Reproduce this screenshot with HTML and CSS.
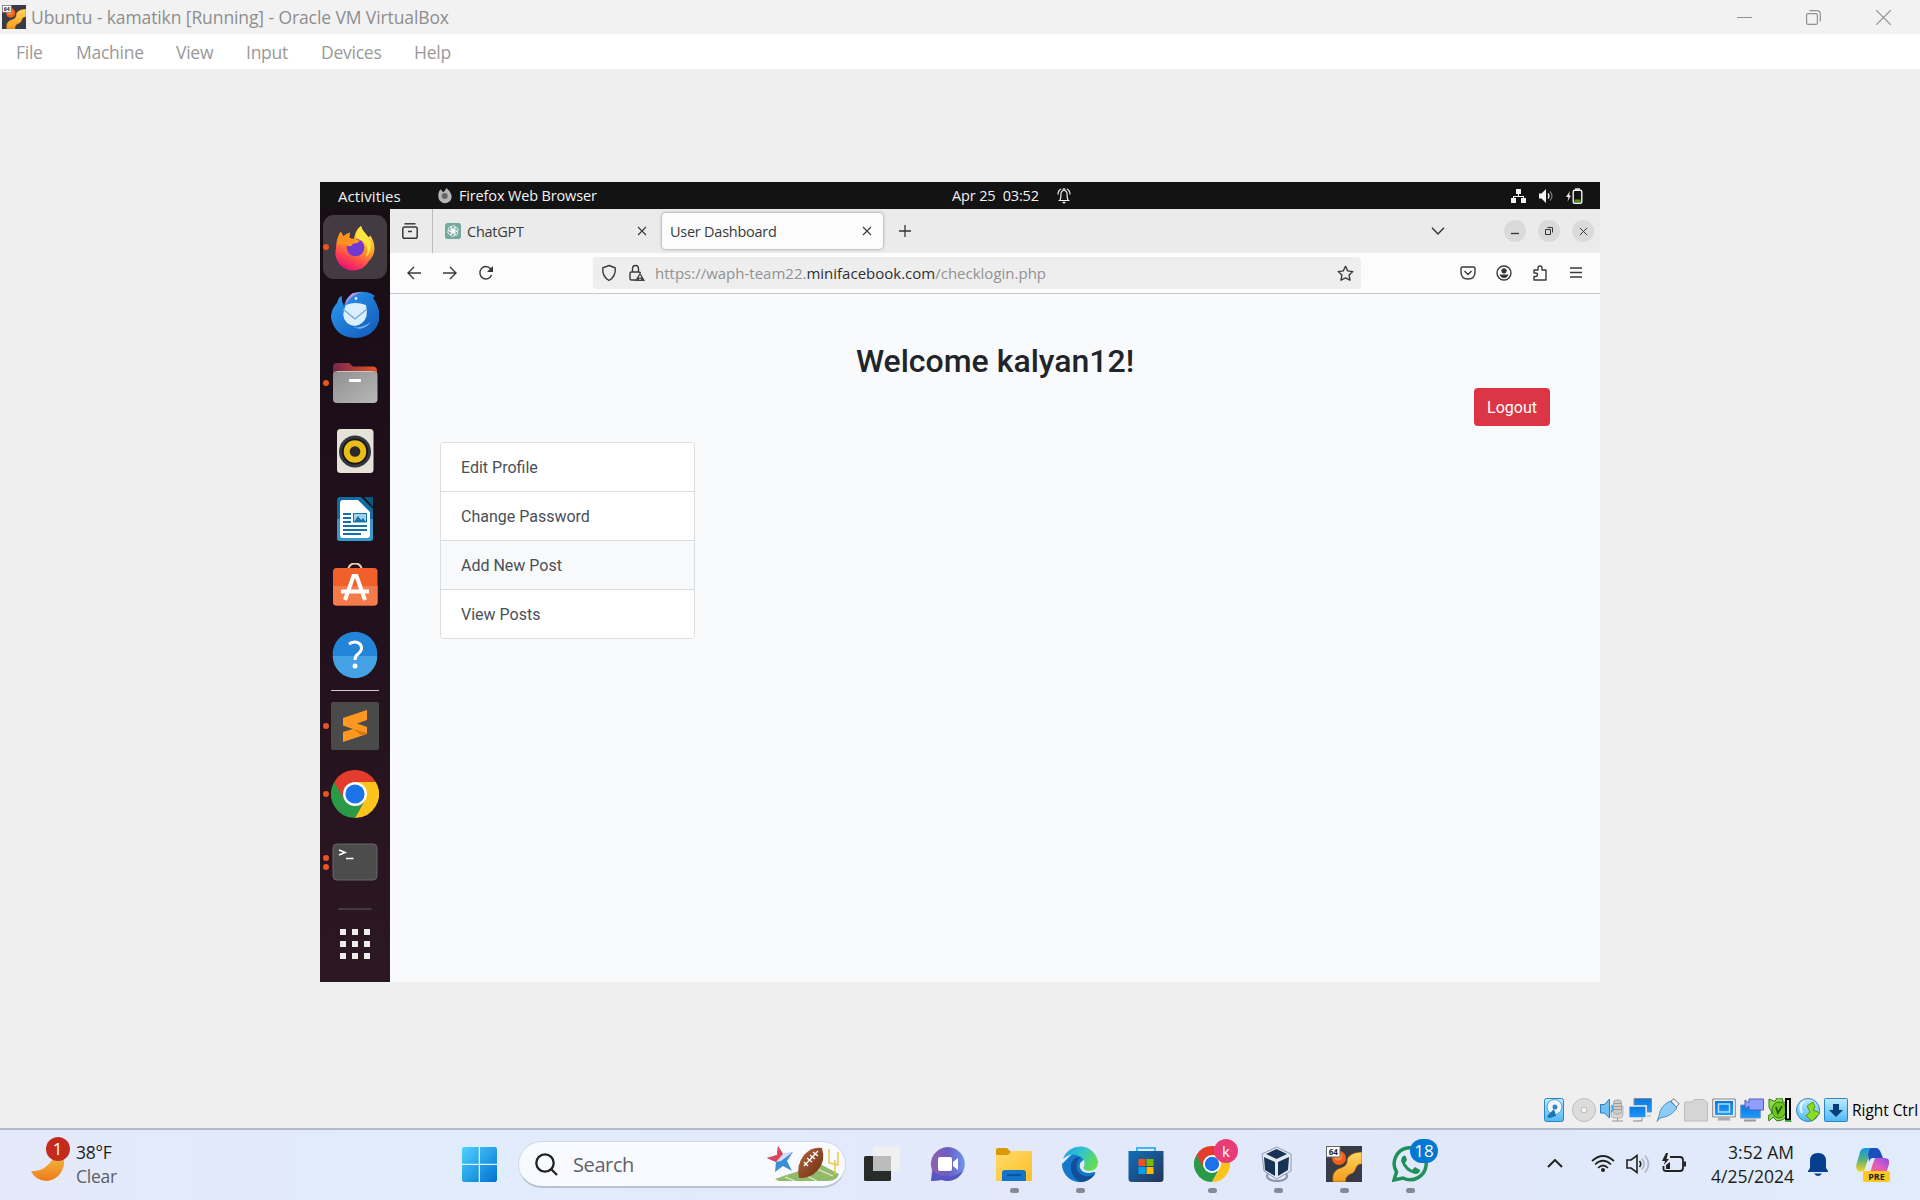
FILE: index.html
```html
<!DOCTYPE html>
<html lang="en">
<head>
<meta charset="utf-8">
<title>Ubuntu - kamatikn [Running] - Oracle VM VirtualBox</title>
<link rel="stylesheet" href="styles.css">
</head>
<body>
<svg class="defs" width="0" height="0">
  <defs>
    <linearGradient id="gFox" x1=".75" y1="0" x2=".3" y2="1"><stop offset="0" stop-color="#fff04a"/><stop offset=".45" stop-color="#ff9a28"/><stop offset=".75" stop-color="#ff4450"/><stop offset="1" stop-color="#e8107a"/></linearGradient>
    <linearGradient id="gBird" x1="0" y1="0" x2="1" y2="1"><stop offset="0" stop-color="#2a9bf0"/><stop offset="1" stop-color="#1257b8"/></linearGradient>
    <linearGradient id="gFold" x1="0" y1="0" x2="1" y2="0"><stop offset="0" stop-color="#76264f"/><stop offset="1" stop-color="#e9541f"/></linearGradient>
    <linearGradient id="gGrey" x1="0" y1="0" x2="1" y2="1"><stop offset="0" stop-color="#8e8e8e"/><stop offset="1" stop-color="#b9b9b9"/></linearGradient>
    <linearGradient id="gWin" x1="0" y1="0" x2="1" y2="1"><stop offset="0" stop-color="#4fd3ff"/><stop offset="1" stop-color="#0070d0"/></linearGradient>
    <linearGradient id="gBlue" x1="0" y1="0" x2="0" y2="1"><stop offset="0" stop-color="#bfeaff"/><stop offset="1" stop-color="#4fb8f5"/></linearGradient>
    <linearGradient id="gScr" x1="0" y1="0" x2="0" y2="1"><stop offset="0" stop-color="#0a78dc"/><stop offset="1" stop-color="#1e9bff"/></linearGradient>
    <linearGradient id="gMoon" x1="0" y1="0" x2="0" y2="1"><stop offset="0" stop-color="#f0b43c"/><stop offset="1" stop-color="#f07818"/></linearGradient>
    <linearGradient id="gYel" x1="0" y1="0" x2="1" y2="1"><stop offset="0" stop-color="#ffdb6a"/><stop offset="1" stop-color="#fcbf26"/></linearGradient>
    <linearGradient id="gChat" x1="0" y1="0" x2="1" y2="0"><stop offset="0" stop-color="#8f63ac"/><stop offset=".5" stop-color="#6a5ec4"/><stop offset="1" stop-color="#6d96ea"/></linearGradient>
    <linearGradient id="gEdge" x1="0" y1="0" x2="1" y2=".5"><stop offset="0" stop-color="#1f9fe4"/><stop offset=".5" stop-color="#2fc3cf"/><stop offset="1" stop-color="#62dd55"/></linearGradient>
    <linearGradient id="gStore" x1="0" y1="0" x2="1" y2="1"><stop offset="0" stop-color="#1070bd"/><stop offset="1" stop-color="#253457"/></linearGradient>
    <linearGradient id="gVm" x1="0" y1="0" x2="0" y2="1"><stop offset="0" stop-color="#ffd75e"/><stop offset="1" stop-color="#f59a1c"/></linearGradient>
    <linearGradient id="gBall" x1="0" y1="0" x2="1" y2="1"><stop offset="0" stop-color="#b5673a"/><stop offset="1" stop-color="#6a2d14"/></linearGradient>
    <linearGradient id="gCopA" x1="0" y1="0" x2="0" y2="1"><stop offset="0" stop-color="#1495e8"/><stop offset=".5" stop-color="#55b37a"/><stop offset="1" stop-color="#ffd21c"/></linearGradient>
    <linearGradient id="gCopB" x1="1" y1="0" x2="0" y2="1"><stop offset="0" stop-color="#8d4be8"/><stop offset=".5" stop-color="#e05cc0"/><stop offset="1" stop-color="#ff6a66"/></linearGradient>
    <symbol id="vm64" viewBox="0 0 36 36">
      <path d="M0 0h36v36H0z" fill="#383a45"/>
      <circle cx="13" cy="12" r="7" fill="#f0601c"/><circle cx="12" cy="10.500" r="4" fill="#ff8c42"/>
      <path d="M36 6C27 6 21 10 21 15C21 20 17 21 12 23C7 26 6 30 7 36H20C19 31 22 29 27 27C31 24 29 18 36 18Z" fill="url(#gVm)" stroke="#8a4b10" stroke-width=".7"/>
      <path d="M.5 .5h13.500v10.500H.5z" fill="#fff" stroke="#666"/>
      <text x="7.300" y="9.200" text-anchor="middle" class="bits">64</text>
    </symbol>
    <symbol id="chrome" viewBox="0 0 48 48">
      <path d="M24 24 3.200 12A24 24 0 0 1 44.800 12Z" fill="#e33b2e"/>
      <path d="M24 24H12L3.200 12A24 24 0 0 0 24 48L34 30Z" fill="#2b9a47"/>
      <path d="M24 12H44.800A24 24 0 0 1 24 48L34 30Z" fill="#fcc31a"/>
      <path d="M3.200 12 13.600 30 20 14Z" fill="#e33b2e"/>
      <circle cx="24" cy="24" r="12" fill="#fff"/><circle cx="24" cy="24" r="9.600" fill="#1a73e8"/>
    </symbol>
    <symbol id="cross" viewBox="0 0 10 10"><path d="M1 1 9 9M9 1 1 9" fill="none" stroke="currentColor" stroke-width="1.100"/></symbol>
  </defs>
</svg>

<header class="titlebar">
  <svg class="app-icon" width="24" height="24"><use href="#vm64"/></svg>
  <span class="title">Ubuntu - kamatikn [Running] - Oracle VM VirtualBox</span>
  <div class="captions">
    <svg width="15" height="15" viewBox="0 0 15 15"><path d="M0 7.500H15" stroke="#909090"/></svg>
    <svg class="restore" width="15" height="15" viewBox="0 0 15 15" fill="none" stroke="#909090" stroke-width="1.200"><rect x=".6" y="3.600" width="10.800" height="10.800" rx="1.500"/><path d="M3.500 .7H11Q14.300 .7 14.300 4V11.500"/></svg>
    <svg width="15" height="15" viewBox="0 0 15 15"><path d="M0 0 15 15M15 0 0 15" stroke="#909090" stroke-width="1.200"/></svg>
  </div>
</header>
<nav class="menubar">
  <span class="m-file">File</span><span class="m-machine">Machine</span><span class="m-view">View</span><span class="m-input">Input</span><span class="m-devices">Devices</span><span class="m-help">Help</span>
</nav>

<main class="stage">
  <section class="guest">
    <div class="topbar">
      <span class="activities">Activities</span>
      <svg class="mini-fox" width="16" height="16" viewBox="0 0 48 48"><path d="M4 24C4 12 7 8 12 4L15 10L20 12C24 8 26 4 28 0C34 6 44 13 44 27A20 20 0 0 1 4 24Z" fill="#b5b5b5"/><circle cx="23" cy="24" r="9" fill="#666"/></svg>
      <span class="app-name">Firefox Web Browser</span>
      <span class="clock">Apr 25&nbsp; 03:52</span>
      <svg class="notif" width="14" height="16" viewBox="0 0 14 16" fill="none" stroke="#eee" stroke-width="1.200"><path d="M1.500 12.500H12.500M3 12Q4 10 4 6Q4 2.500 7 2.500Q10 2.500 10 6Q10 10 11 12M5.500 1.500Q7 .2 8.500 1.500"/><path d="M1 6.500Q1 2.500 4 1M13 6.500Q13 2.500 10 1"/><path d="M5 13.800H9L7 16Z" fill="#eee" stroke="none"/></svg>
      <div class="indicators">
        <svg width="15" height="14" viewBox="0 0 15 14" fill="#f2f2f2"><path d="M5 0h5v5H5zM0 9h5v5H0zM10 9h5v5h-5zM7 5h1v2h5v2h-1V8H3v1H2V7h5z"/></svg>
        <svg width="15" height="14" viewBox="0 0 15 14"><path d="M0 4.500H2.500L7 0V14L2.500 9.500H0Z" fill="#f2f2f2"/><path d="M9 4.500Q11 7 9 9.500" stroke="#f2f2f2" stroke-width="1.300" fill="none"/><path d="M11 2.500Q15 7 11 11.500" stroke="#777" stroke-width="1.300" fill="none"/></svg>
        <svg width="17" height="16" viewBox="0 0 17 16"><path d="M4 3 0 9H2.500L1.500 13.500 5 7.500H3Z" fill="#f2f2f2"/><rect x="7.200" y="2.200" width="8.600" height="13" rx="1.500" fill="none" stroke="#f2f2f2" stroke-width="1.400"/><path d="M9 .3h5v1.500H9z" fill="#f2f2f2"/><path d="M8.500 11.500h6v2.500h-6z" fill="#4e9a06"/></svg>
      </div>
    </div>
    <div class="desktop">
      <aside class="dock">
        <div class="launch active"><i class="dot"></i>
          <svg width="48" height="48" viewBox="0 0 48 48"><g transform="translate(2.200 .3) scale(.93)"><path d="M3 27C3 18 6 12 8 9L11 14Q14 11 18 10L17 15Q21 17 22 19C23 12 25 6 30 3C31 8 34 10 38 15L40 13C47 24 45 35 38 41A19 19 0 0 1 3 27Z" fill="url(#gFox)"/><path d="M30 3C31 8 34 10 37 14C42 20 42 31 35 36C40 26 34 19 27 17C22 15 27 7 30 3Z" fill="#ffe63e"/><circle cx="24" cy="26" r="9.500" fill="#7139d0"/><path d="M15 24Q14 15 24 17L29 19Q26 22 21 22Q20 26 15 24Z" fill="#ff9b22"/><path d="M8 9 11 14Q15 11 18 11L17 16 24 19Q21 23 16 22Q10 21 5 23Q5 15 8 9Z" fill="#ff921e"/></g></svg></div>
        <div class="launch"><svg width="48" height="48" viewBox="0 0 48 48"><path d="M0 27C0 20 3 15 6 12Q8 5 11 5Q10 9 13 15C15 5 23 0 33 1Q39 1 44 5L42 7Q46 12 48 20A24 22 0 0 1 24 47Q4 46 0 27Z" fill="url(#gBird)"/><path d="M14 16C17 7 24 3 32 1L22 2Q15 6 14 16Z" fill="#b991ee"/><path d="M15 14Q24 10 35 14Q38 27 31 32Q24 38 16 32Q9 25 15 14Z" fill="#dceffe"/><path d="M12 18 24 28 36 18" fill="none" stroke="#65a6dc" stroke-width="1.200"/><circle cx="25" cy="7.500" r="1.400" fill="#e4f2ff"/><path d="M22 36Q30 38 40 31Q32 41 22 36" fill="#7eb6f5"/></svg></div>
        <div class="launch"><i class="dot"></i><svg width="48" height="48" viewBox="0 0 48 48"><path d="M2 16V8Q2 4 6 4H18L22 7.500H42Q46 7.500 46 12V18H2Z" fill="url(#gFold)"/><rect x="2" y="12" width="44.500" height="32" rx="4" fill="url(#gGrey)"/><path d="M6 12.500H42" stroke="#c5c5c5"/><rect x="18" y="20" width="12" height="3" rx="1" fill="#fff"/></svg></div>
        <div class="launch"><svg width="48" height="48" viewBox="0 0 48 48"><rect x="6" y="2" width="36.500" height="44" rx="3.500" fill="#e5e2d8"/><circle cx="24" cy="24.500" r="16" fill="#343641"/><circle cx="24" cy="24.500" r="13" fill="#15161b"/><circle cx="24" cy="24.500" r="11.300" fill="#eabd18"/><circle cx="24" cy="24.500" r="5.300" fill="#292929"/></svg></div>
        <div class="launch"><svg width="48" height="48" viewBox="0 0 48 48"><path d="M9 2H30L42 14V43Q42 46 39 46H9Q6 46 6 43V5Q6 2 9 2Z" fill="#0e6da0"/><path d="M6 24H42V43Q42 46 39 46H9Q6 46 6 43Z" fill="#3799ca"/><path d="M33 2H42V12Z" fill="#0b5980"/><path d="M12 5H27L39 17V40Q39 43 36 43H12Q9 43 9 40V8Q9 5 12 5Z" fill="#fff"/><path d="M12 19h8M12 23h8M12 27h8M12 31h24M12 35h24M12 39h18" stroke="#1472a6" stroke-width="2"/><rect x="22.500" y="18.500" width="13" height="8.500" fill="#a3d2ee" stroke="#1472a6"/><path d="M23 27 27 21 30 25 32 23 35 27Z" fill="#1472a6"/></svg></div>
        <div class="launch"><svg width="48" height="48" viewBox="0 0 48 48"><g transform="translate(0 -2)"><path d="M17 8Q18 1.500 24 1.500Q30 1.500 31 8" transform="translate(0 1)" fill="none" stroke="#ecd1ac" stroke-width="2"/><rect x="2" y="7" width="44.500" height="37.500" rx="3.500" fill="#f1602b"/><path d="M2 25H46.500V41Q46.500 44.500 43 44.500H5.500Q2 44.500 2 41Z" fill="#f67b4b"/><path d="M14 39 22.500 15H25.500L34 39M10 30.500H38" fill="none" stroke="#fff" stroke-width="4"/></g></svg></div>
        <div class="launch"><svg width="48" height="48" viewBox="0 0 48 48"><g transform="translate(0 -2)"><circle cx="24" cy="25" r="22.300" fill="#2385d8"/><path d="M1.700 27H46.300A22.300 22.300 0 0 1 1.700 27Z" fill="#44a2e4"/><path d="M18 15Q24 11 29 15Q33 20 27 25Q24 27 24 31" fill="none" stroke="#fff" stroke-width="3"/><circle cx="24" cy="37" r="2.500" fill="#fff"/></g></svg></div>
        <hr class="dock-line">
        <div class="launch"><i class="dot"></i><svg width="48" height="48" viewBox="0 0 48 48"><rect width="48" height="48" rx="2.500" fill="#4a4a4a"/><path d="M12 16 36 8V18L26 21.500 36 25V32L12 40V30L22 27 12 23.500Z" fill="#ff9820"/><path d="M22 27 36 31V32L31 33.500Z" fill="#d87606"/></svg></div>
        <div class="launch"><i class="dot"></i><svg width="48" height="48"><use href="#chrome"/></svg></div>
        <div class="launch"><i class="dot double"></i><svg width="48" height="48" viewBox="0 0 48 48"><rect x="2" y="6" width="44" height="36" rx="4" fill="#4c4c4c" stroke="#666"/><path d="M8 12 14 14.500 8 17M15 20.500H22.500" fill="none" stroke="#fff" stroke-width="1.700"/></svg></div>
        <div class="peek"></div>
        <svg class="apps" width="32" height="32" viewBox="0 0 32 32" fill="#eeedec"><path d="M1 1h6v6H1zM13 1h6v6h-6zM25 1h6v6h-6zM1 13h6v6H1zM13 13h6v6h-6zM25 13h6v6h-6zM1 25h6v6H1zM13 25h6v6h-6zM25 25h6v6h-6z"/></svg>
      </aside>
      <div class="browser">
        <div class="tabs">
          <div class="recent"><svg width="16" height="16" viewBox="0 0 16 16" fill="none" stroke="#3a3a3a" stroke-width="1.500"><path d="M2.500 .8H13.500"/><rect x=".8" y="4" width="14.400" height="11.200" rx="1.800"/><path d="M6 8.500H10"/></svg></div>
          <div class="tab">
            <svg width="16" height="16" viewBox="0 0 16 16"><rect width="16" height="16" rx="2.500" fill="#74aa9c"/><g fill="none" stroke="#fff" stroke-width=".8"><path id="petal" d="M6 8.800V5Q6.300 2.600 8.500 2.600Q10.500 2.800 10.700 4.500L7.500 6.500V9.500"/><use href="#petal" transform="rotate(60 8 8)"/><use href="#petal" transform="rotate(120 8 8)"/><use href="#petal" transform="rotate(180 8 8)"/><use href="#petal" transform="rotate(240 8 8)"/><use href="#petal" transform="rotate(300 8 8)"/></g></svg>
            <span class="t-chat">ChatGPT</span><svg class="x" width="10" height="10"><use href="#cross"/></svg>
          </div>
          <div class="tab current"><span class="t-user">User Dashboard</span><svg class="x" width="10" height="10"><use href="#cross"/></svg></div>
          <svg class="plus" width="12" height="12" viewBox="0 0 12 12"><path d="M6 0V12M0 6H12" stroke="#333" stroke-width="1.300"/></svg>
          <div class="tab-end">
            <svg class="chev" width="14" height="8" viewBox="0 0 14 8"><path d="M1 .8 7 7 13 .8" fill="none" stroke="#333" stroke-width="1.400"/></svg>
            <b class="wb"><svg width="8" height="8" viewBox="0 0 8 8"><path d="M0 6.500H8" stroke="#333" stroke-width="1.300"/></svg></b>
            <b class="wb"><svg width="8" height="8" viewBox="0 0 8 8" fill="none" stroke="#333"><path d="M.5 2.500h5v5h-5zM2.500 .5H7.500V5.500"/></svg></b>
            <b class="wb"><svg width="9" height="9"><use href="#cross"/></svg></b>
          </div>
        </div>
        <div class="navbar">
          <svg class="nav-i" width="16" height="16" viewBox="0 0 16 16"><path d="M15 8H2M8 2 2 8 8 14"/></svg>
          <svg class="nav-i" width="16" height="16" viewBox="0 0 16 16"><path d="M1 8H14M8 2 14 8 8 14"/></svg>
          <svg class="nav-i" width="16" height="16" viewBox="0 0 16 16"><path d="M13.500 10A6 6.300 0 1 1 12.500 3.700L13.500 5"/><path d="M15 1V7H9Z" fill="#333" stroke="none"/></svg>
          <div class="url">
            <svg class="u-i" width="16" height="18" viewBox="0 0 16 18"><path d="M8 1.500 14.200 3.800Q15 12.500 8 16.500Q1 12.500 1.800 3.800Z"/></svg>
            <svg class="u-i lock" width="16" height="18" viewBox="0 0 16 18"><path d="M3.500 8V5Q3.500 1.500 6.500 1.500Q9.500 1.500 9.500 5V8M7 16H2.500Q1 16 1 14.500V9.500Q1 8 2.500 8H10Q11.300 8 11.500 9"/><path d="M11 8.500 16 17H6Z" fill="#444" stroke="none"/><path d="M11 11.500V14M11 15V16" stroke="#fff"/></svg>
            <span class="addr">https://waph-team22.<span class="host">minifacebook.com</span>/checklogin.php</span>
            <svg class="u-i star" width="17" height="17" viewBox="0 0 17 17"><path d="M8.500 1.300 10.700 5.900 15.800 6.600 12.100 10.100 13 15.200 8.500 12.800 4 15.200 4.900 10.100 1.200 6.600 6.300 5.900Z" stroke-linejoin="round"/></svg>
          </div>
          <div class="tools">
            <svg width="16" height="16" viewBox="0 0 16 16"><path d="M2.500 2H13.500Q15 2 15 3.500V7Q15 14 8 14Q1 14 1 7V3.500Q1 2 2.500 2ZM4.500 6 8 9.500 11.500 6"/></svg>
            <svg width="16" height="16" viewBox="0 0 16 16"><circle cx="8" cy="8" r="7"/><circle cx="8" cy="5.800" r="2.600" fill="#333" stroke="none"/><path d="M3.500 9.500H12.500Q11 13 8 13Q5 13 3.500 9.500Z" fill="#333" stroke="none"/></svg>
            <svg width="16" height="16" viewBox="0 0 16 16"><path d="M2 15V11.500H3.500Q5.500 11.500 5.500 9.500Q5.500 8 3.500 8H2V5H6V3Q6 1 8 1Q10 1 10 3V5H14V15Z" stroke-linejoin="round"/></svg>
            <svg width="16" height="16" viewBox="0 0 16 16"><path d="M2 3H14M2 7.500H14M2 12H14"/></svg>
          </div>
        </div>
        <div class="page">
          <h2>Welcome kalyan12!</h2>
          <div class="logout-row"><a class="logout">Logout</a></div>
          <div class="list">
            <a>Edit Profile</a><a>Change Password</a><a class="hover">Add New Post</a><a>View Posts</a>
          </div>
        </div>
      </div>
    </div>
  </section>
</main>

<div class="statusbar">
  <svg viewBox="0 0 24 24"><rect x=".5" y=".5" width="19" height="23" rx="2" fill="url(#gBlue)" stroke="#2687c6"/><circle cx="10.500" cy="9" r="7.500" fill="#f1f8fd" stroke="#4d9dce"/><circle cx="11" cy="9" r="2.500" fill="#3387c4"/><path d="M10 11 4 17Q2 20 6 20L12 18Z" fill="#1c73b6"/></svg>
  <svg viewBox="0 0 24 24"><circle cx="12" cy="12" r="11.500" fill="#dcdcdc" stroke="#bdbdbd"/><circle cx="12" cy="12" r="3" fill="#f3f3f3" stroke="#bbb"/></svg>
  <svg viewBox="0 0 24 24"><path d="M11 8h12v9q0 3-3 3h-6q-3 0-3-3z" fill="#d6d6d6" stroke="#b5b5b5"/><rect x="13.500" y="2" width="8" height="14" rx="2.500" fill="#ccc" stroke="#aaa"/><path d="M14 5.500h7M14 8.500h7M14 11.500h7M17.500 20v3M12 23h11" stroke="#999"/><path d="M.5 6.500H4.500L9.500 1V20L4.500 15H.5Z" fill="#72bff3" stroke="#2d7db9"/><path d="M11.500 7Q14 10.500 11.500 14" fill="none" stroke="#4aa2e0" stroke-width="1.500"/></svg>
  <svg viewBox="0 0 24 24"><path d="M6 .5h17.500V14H6z" fill="url(#gScr)" stroke="#888"/><path d="M17 14v4h6" stroke="#aaa" fill="none"/><path d="M.7 8h17.500v12H.7z" fill="url(#gScr)" stroke="#eee" stroke-width="1.500"/><path d="M5 23h9v-3" stroke="#888" fill="none"/></svg>
  <svg viewBox="0 0 24 24"><path d="M15 3 18 .7 23.300 6 20 9Z" fill="#eee" stroke="#777"/><path d="M14 3 21 10Q15 18 8 19L4 20 1 23.500 3 18Q4 8 14 3Z" fill="#8dcdf5" stroke="#4b93c4"/></svg>
  <svg viewBox="0 0 24 24"><path d="M.5 5Q.5 4 2 4H8L10 1.500H20L22 4H23.500V23H.5Z" fill="#d5d5d5" stroke="#bcbcbc"/></svg>
  <svg viewBox="0 0 24 24"><path d="M.7 1h22.600v18H.7z" fill="#eee" stroke="#888"/><path d="M3 3h18v14H3z" fill="url(#gScr)"/><path d="M6.500 6h11v8h-11z" fill="none" stroke="#b0ddff" stroke-width="1.500"/><path d="M5 22.500h14l-2-3H7z" fill="#aaa"/></svg>
  <svg viewBox="0 0 24 24"><path d="M.7 7h19.600v13H.7z" fill="url(#gScr)" stroke="#7195b8"/><path d="M4 22.500h12" stroke="#999" stroke-width="2"/><path d="M9 1H23.500V12H9V8L5 11V2L9 5Z" fill="#8f9fff" stroke="#5360b5"/></svg>
  <svg viewBox="0 0 24 24"><path d="M1 1 7 3.500 9 0H14L15 4 19 5V19L14 22 9 23 5 19 1 23 0 18 4 15 1 9Z" fill="#8edb4a" stroke="#347a14"/><ellipse cx="11" cy="12" rx="7" ry="8" fill="#6dc51f" stroke="#347a14"/><path d="M8 9 10 15 14 8" stroke="#275b13" stroke-width="1.800" fill="none"/><path d="M18 1h4v20.500h-4z" fill="#efefef" stroke="#000" stroke-width="2"/><path d="M17 23.500H24" stroke="#1be51b"/></svg>
  <svg viewBox="0 0 24 24"><circle cx="12" cy="12" r="11.500" fill="url(#gBlue)" stroke="#3186bc"/><path d="M6 15Q2 7 9 3" stroke="#e1f6ff" stroke-width="2" fill="none"/><path d="M11 8 17 4 19 9 17 12 24 15 16 23 10 18 14 14Z" fill="#8cda22" stroke="#4b9c16"/></svg>
  <svg viewBox="0 0 24 24"><rect x=".5" y=".5" width="23" height="23" rx="1" fill="url(#gBlue)" stroke="#2687c6"/><path d="M9 6h6v6h4l-7 7-7-7h4z" fill="#073f78"/></svg>
  <span class="hostkey">Right Ctrl</span>
</div>

<footer class="taskbar">
  <div class="weather">
    <div class="moon"><svg width="34" height="24" viewBox="0 0 34 24"><path d="M0 12Q12 14 22 0H33Q34 8 29 15Q23 22 15 22Q4 21 0 12Z" fill="url(#gMoon)"/></svg><b class="badge one">1</b></div>
    <div class="w-text"><span class="temp">38°F</span><span class="clear">Clear</span></div>
  </div>
  <svg class="start" width="35" height="35" viewBox="0 0 35 35"><path d="M1.500 0H16.700V16.700H0V1.500ZM18 0H33.500L35 1.500V16.700H18ZM0 18H16.700V35H1.500L0 33.500ZM18 18H35V33.500L33.500 35H18Z" fill="url(#gWin)"/></svg>
  <div class="search">
    <svg width="23" height="23" viewBox="0 0 23 23" fill="none" stroke="#222" stroke-width="2.300"><circle cx="10" cy="10" r="8.700"/><path d="M16 16 22 22"/></svg>
    <span>Search</span>
    <svg class="art" width="74" height="36" viewBox="0 0 74 36"><path d="M8 33Q30 25 55 19L72 28Q70 35 61 35H12Z" fill="#91bb68"/><path d="M18 31 28 35M34 27 50 35M50 23 66 30" stroke="#e3efd5" stroke-width="1.200"/><path d="M11 0 16 8 26 6 20 15 25 25 16 20 8 26 9 16 0 12 10 9Z" fill="#398fd2"/><path d="M11 0 16 8 9 16 0 12 10 9Z" fill="#e04457"/><path d="M16 8 26 6 14 15 9 16Z" fill="#d7dcf3"/><path d="M32 32Q29 19 37 9Q45 0 55 2Q59 15 51 24Q43 33 32 32Z" fill="url(#gBall)"/><path d="M37 20 51 5M37 16 41 20M40 12 45 16M43 9 48 13M46 6 51 10" stroke="#fff" stroke-width="1.300"/><path d="M62 3V17L67 18M71 6V19L67 18M68 14V28" stroke="#e8ca43" stroke-width="1.500" fill="none"/></svg>
  </div>
  <div class="pins">
    <div class="pin"><svg viewBox="0 0 36 36"><rect y="10" width="27" height="25" rx="1.500" fill="#292a2a"/><rect x="9" y="1" width="27" height="24" rx="1.500" fill="#f0f0f0"/><path d="M9 10h18v15H9z" fill="#bcbcbc"/></svg></div>
    <div class="pin"><svg viewBox="0 0 36 36"><path d="M18 1A17 17 0 1 1 12 34L1 35 2 24A17 17 0 0 1 18 1Z" fill="url(#gChat)"/><path d="M1 35 3 25Q17 36 33 25Q27 37 12 34Z" fill="#5557c5"/><rect x="8" y="11" width="14" height="14" rx="2" fill="#fff"/><path d="M23 16 28 12V24L23 20Z" fill="#fff"/></svg></div>
    <div class="pin run"><svg viewBox="0 0 36 36"><path d="M0 4Q0 2 2 2H11L15 6V12H0Z" fill="#d99a0a"/><path d="M0 9H12L16 5H36V35H0Z" fill="url(#gYel)"/><path d="M6 35V27Q6 24 9 24H27Q30 24 30 27V35Z" fill="#1475c8"/><path d="M11 29H25" stroke="#074b8a" stroke-width="1.500"/></svg></div>
    <div class="pin run"><svg viewBox="0 0 36 36"><path d="M0 18A18 18 0 0 0 33 28Q34 26 32 26Q21 29 18 22Q17 18 19 16L24 12 12 6Z" fill="#1477c9"/><path d="M9 20Q10 11 18 11Q10 23 20 29Q26 32 33 28A18 18 0 0 1 18 36Q8 30 9 20Z" fill="#114f98"/><path d="M1 13A18 18 0 0 1 36 16Q36 25 26 25Q20 24 22 20Q24 15 19 11Q10 5 1 13Z" fill="url(#gEdge)"/></svg></div>
    <div class="pin"><svg viewBox="0 0 36 36"><path d="M9 6V2H27V6" fill="none" stroke="#39b9f2" stroke-width="2"/><path d="M.5 5H35.500V33Q35.500 36 32 36H4Q.5 36 .5 33Z" fill="url(#gStore)"/><path d="M10.500 13h7v7h-7z" fill="#f25022"/><path d="M18.500 13h7v7h-7z" fill="#7fba00"/><path d="M10.500 21h7v7h-7z" fill="#00a4ef"/><path d="M18.500 21h7v7h-7z" fill="#ffb900"/></svg></div>
    <div class="pin run"><svg><use href="#chrome"/></svg><b class="badge k">k</b></div>
    <div class="pin run"><svg viewBox="0 0 36 36"><ellipse cx="17" cy="30" rx="10" ry="5" fill="none" stroke="#8793ab" stroke-width="2"/><path d="M2 8 16.500 1 31 8V25L16.500 33 4 25Z" fill="#e5e9ef" stroke="#899abb"/><path d="M6 8 16.500 3 27 8 16.500 13ZM4 11 15 16V30L5 24ZM29 11 18 16V30L28 24Z" fill="#173256"/></svg></div>
    <div class="pin run"><svg><use href="#vm64"/></svg></div>
    <div class="pin run"><svg viewBox="0 0 36 36"><path d="M2 34 4.500 26A16 16 0 1 1 11 32Z" fill="none" stroke="#20905a" stroke-width="3.500"/><path d="M10 11Q13 8 14 11L15 14 13 17Q16 22 20 24L23 21 28 24Q28 28 23 28Q13 26 9 15Z" fill="#20905a"/></svg><b class="badge wa">18</b></div>
  </div>
  <div class="tray">
    <svg class="t-up" width="16" height="9" viewBox="0 0 16 9"><path d="M1 8 8 1 15 8" fill="none" stroke="#222" stroke-width="2"/></svg>
    <svg class="t-wifi" width="24" height="18" viewBox="0 0 24 18" fill="none" stroke="#222" stroke-width="1.700"><path d="M1 6Q12-4 23 6M4 9.500Q12 2 20 9.500M7 13Q12 8 17 13"/><circle cx="12" cy="15" r="2" fill="#222" stroke="none"/></svg>
    <svg class="t-vol" width="25" height="20" viewBox="0 0 25 20" fill="none" stroke="#222" stroke-width="1.600"><path d="M1 6H5L11 1.500V18.500L5 14H1ZM13.500 7Q16 10 13.500 13"/><path d="M16 4.500Q20 10 16 15.500M19 1.500Q26 10 19 18.500" stroke="#adb6c4"/></svg>
    <svg class="t-bat" width="24" height="20" viewBox="0 0 24 20"><path d="M8 4H18Q21 4 21 7V15Q21 18 18 18H4Q1.500 18 1.500 16V13" fill="none" stroke="#222" stroke-width="1.800"/><path d="M21.500 8.500H24V13.500H21.500Z" fill="#222"/><path d="M4 0 0 8H3L2 12 7 6H4.500L6 0ZM4 12 8 9V16H4Z" fill="#222"/></svg>
    <div class="datetime"><span class="time">3:52 AM</span><span class="date">4/25/2024</span></div>
    <svg class="t-bell" width="20" height="23" viewBox="0 0 20 23"><path d="M0 18 2 15V8Q2 0 10 0Q18 0 18 8V15L20 18V19H0ZM6 20.500H14Q12 23 10 23Q8 23 6 20.500Z" fill="#063f8e"/></svg>
    <div class="copilot"><svg width="35" height="34" viewBox="0 0 35 34"><path d="M1 18 5 4Q6 0 11 0H22Q15 2 12 14L9 23Q2 26 1 18Z" fill="url(#gCopA)"/><path d="M16 0H21Q24 0 26 5L28 10H18Q15 10 14 14Q12 2 16 0Z" fill="#1b4fc0"/><path d="M20 10H30Q35 10 34 16L31 26H13Q16 24 17 18Z" fill="url(#gCopB)"/></svg><b>PRE</b></div>
  </div>
</footer>
</body>
</html>
```
FILE: styles.css
```css
* { box-sizing: border-box; }
body { margin: 0; width: 1920px; height: 1200px; overflow: hidden; display: flex; flex-direction: column; background: #efefef; font-family: "Open Sans", "Noto Sans", sans-serif; white-space: nowrap; }
svg { display: block; flex: none; }
.defs { position: absolute; }
.bits { font: bold 8px "Open Sans", sans-serif; fill: #222; }

.titlebar { height: 34px; flex: none; display: flex; align-items: center; background: #f2f2f2; padding-left: 2px; }
.title { margin-left: 5px; font-size: 17.500px; letter-spacing: -.1px; line-height: 32px; padding-bottom: 1px; color: #8e8e8e; }
.captions { margin-left: auto; margin-right: 29px; display: flex; gap: 54.500px; }
.restore { margin-left: -.500px; margin-right: 1px; }
.menubar { height: 35px; flex: none; display: flex; align-items: center; background: #fff; color: #999; font-size: 17.500px; letter-spacing: -.25px; padding-left: 16px; }
.menubar span { flex: none; }
.m-file { width: 60px; } .m-machine { width: 100px; } .m-view { width: 70px; } .m-input { width: 75px; } .m-devices { width: 93px; }

.stage { height: 1022px; flex: none; padding: 113px 320px 0; }
.guest { height: 800px; display: flex; flex-direction: column; overflow: hidden; }
.topbar { height: 27px; flex: none; display: flex; align-items: center; background: #131313; color: #f2f2f2; font-size: 14.500px; }
.activities { width: 99px; padding-left: 18px; font-size: 15px; letter-spacing: .1px; }
.mini-fox { margin-left: 18px; }
.app-name { width: 493px; padding-left: 6px; letter-spacing: -.15px; }
.clock { width: 106px; padding-left: 6px; letter-spacing: -.15px; }
.notif { margin-left: 5px; }
.indicators { margin-left: auto; margin-right: 17px; display: flex; align-items: center; gap: 12.500px; }
.desktop { flex: 1; display: flex; min-height: 0; }
.dock { width: 70px; flex: none; display: flex; flex-direction: column; align-items: center; background: linear-gradient(165deg, #180d15, #21101c 50%, #2c1823); padding-top: 4px; }
.launch { position: relative; width: 64px; height: 64px; flex: none; margin-top: 2px; margin-bottom: 2px; display: flex; align-items: center; justify-content: center; border-radius: 11px; }
.launch.active { background: #443a41; }
.dot { position: absolute; left: 0; top: 29px; width: 6px; height: 6px; border-radius: 50%; background: #e95420; }
.dot.double { top: 25px; box-shadow: 0 9px #e95420; }
.dock-line { width: 48px; height: 1px; border: 0; margin: 1px 0; background: #cfc8cd; flex: none; }
.peek { width: 34px; height: 2px; flex: none; margin-top: 12px; border-radius: 2px 2px 0 0; background: #463941; }
.apps { margin-top: 18px; }

.browser { flex: 1; display: flex; flex-direction: column; color: #3a3a3a; }
.tabs { height: 44px; flex: none; display: flex; align-items: center; background: #ebebeb; font-size: 14.500px; }
.recent { width: 43px; height: 44px; border-right: 1px solid #bcbcbc; display: flex; align-items: center; padding-left: 12px; }
.tab { width: 229px; display: flex; align-items: center; padding-left: 12px; }
.tab span { margin-left: 6px; letter-spacing: -.25px; }
.x { margin-left: auto; margin-right: 15px; }
.tab.current { width: 221px; height: 36px; padding-left: 2px; background: #fcfcfc; border-radius: 4px; box-shadow: 0 0 3px rgba(0, 0, 0, .45); }
.tab.current .x { margin-right: 11px; }
.plus { margin-left: 16px; }
.tab-end { margin-left: auto; margin-right: 6px; display: flex; align-items: center; gap: 12px; }
.chev { margin-right: 47px; }
.wb { width: 22px; height: 22px; border-radius: 50%; background: #dadada; display: flex; align-items: center; justify-content: center; }
.navbar { height: 41px; flex: none; display: flex; align-items: center; background: #fcfcfc; border-bottom: 1px solid #c4c8cb; padding-left: 16px; }
.nav-i, .u-i, .tools svg { fill: none; stroke: #3a3a3a; stroke-width: 1.400; }
.nav-i { margin-right: 20px; }
.url { width: 768px; height: 32px; margin-left: 79px; border-radius: 4px; background: #eee; display: flex; align-items: center; padding: 0 7px 0 8px; }
.lock { margin-left: 12px; }
.addr { margin-left: 10px; font-size: 15px; color: #929292; }
.host { color: #303030; }
.star { margin-left: auto; }
.tools { margin-left: auto; margin-right: 16px; display: flex; gap: 20px; }

.page { flex: 1; background: #f8fafc; padding: 48px 50px; font-family: Roboto, sans-serif; }
h2 { margin: 0 0 8px; font-size: 32px; line-height: 38px; font-weight: 500; text-align: center; color: #212529; }
.logout-row { display: flex; justify-content: flex-end; margin-bottom: 16px; }
.logout { width: 76px; height: 38px; line-height: 39px; border-radius: 4px; background: #dc3545; color: #fff; font-size: 16px; text-align: center; }
.list { width: 255px; border: 1px solid #dcdddf; border-radius: 4px; overflow: hidden; color: #495057; font-size: 16px; }
.list a { display: block; height: 49px; line-height: 49px; padding-left: 20px; background: #fff; border-bottom: 1px solid #dcdddf; }
.list a:last-child { height: 48px; border: 0; }
.list .hover { background: #f8f9fb; }

.statusbar { height: 37px; flex: none; display: flex; gap: 4px; padding: 7px 0 0 1544px; }
.statusbar svg { width: 24px; height: 24px; }
.hostkey { font-size: 15.500px; line-height: 24px; letter-spacing: -.05px; color: #000; }

.taskbar { position: relative; height: 72px; flex: none; border-top: 2px solid #b2b9c8; background: linear-gradient(90deg, #e4e9f9, #e1ecfc 25%, #e3e9fb 52%, #e0e8fa 75%, #e0ecfc); display: flex; }
.weather { width: 462px; display: flex; padding: 3px 0 0 31px; }
.moon { position: relative; width: 45px; padding-top: 26px; }
.badge { position: absolute; height: 24px; border-radius: 12px; line-height: 24px; text-align: center; color: #fff; font-weight: 400; }
.one { left: 14.500px; top: 4px; width: 24px; background: #c42b1c; font-size: 17px; }
.w-text { display: flex; flex-direction: column; font-size: 17.500px; line-height: 24px; padding-top: 7px; letter-spacing: -.25px; color: #1c1c1c; }
.w-text .clear { color: #5b6068; }
.start { margin-top: 17px; }
.search { width: 328px; height: 47px; margin: 11px 0 0 21px; border: 1px solid #cfd9ea; border-bottom: 2px solid #b9c2d1; border-radius: 24px; background: #f8faff; display: flex; align-items: center; padding-left: 16px; }
.search span { margin-left: 15px; font-size: 20px; letter-spacing: -.4px; color: #5f6268; }
.art { margin-left: auto; margin-right: 4px; }
.pins { display: flex; gap: 30px; margin-left: 18px; padding-top: 16px; }
.pin { position: relative; width: 36px; height: 48px; flex: none; }
.pin svg { width: 36px; height: 36px; }
.run::after { content: ""; display: block; width: 9px; height: 5px; margin: 6px 0 0 14px; border-radius: 3px; background: #858994; }
.k { left: 20px; top: -7px; width: 24px; background: #e93c77; font-size: 15px; }
.wa { left: 18px; top: -7px; width: 28px; background: #0078d4; font-size: 17px; }
.tray { flex: 1; display: flex; align-items: flex-start; padding-left: 119px; }
.t-up { margin-top: 29px; } .t-wifi { margin: 25px 0 0 28px; } .t-vol { margin: 24px 0 0 11px; } .t-bat { margin: 23px 0 0 11px; }
.datetime { width: 108px; padding-top: 10px; display: flex; flex-direction: column; text-align: right; font-size: 17.500px; line-height: 24px; color: #1c1c1c; }
.t-bell { margin: 23px 0 0 14px; }
.copilot { position: relative; margin: 18px 0 0 27px; }
.copilot b { position: absolute; left: 8px; top: 23px; width: 27px; height: 11px; border-radius: 2px; background: #ffc61c; color: #222; font-size: 9px; line-height: 11px; text-align: center; }
```
